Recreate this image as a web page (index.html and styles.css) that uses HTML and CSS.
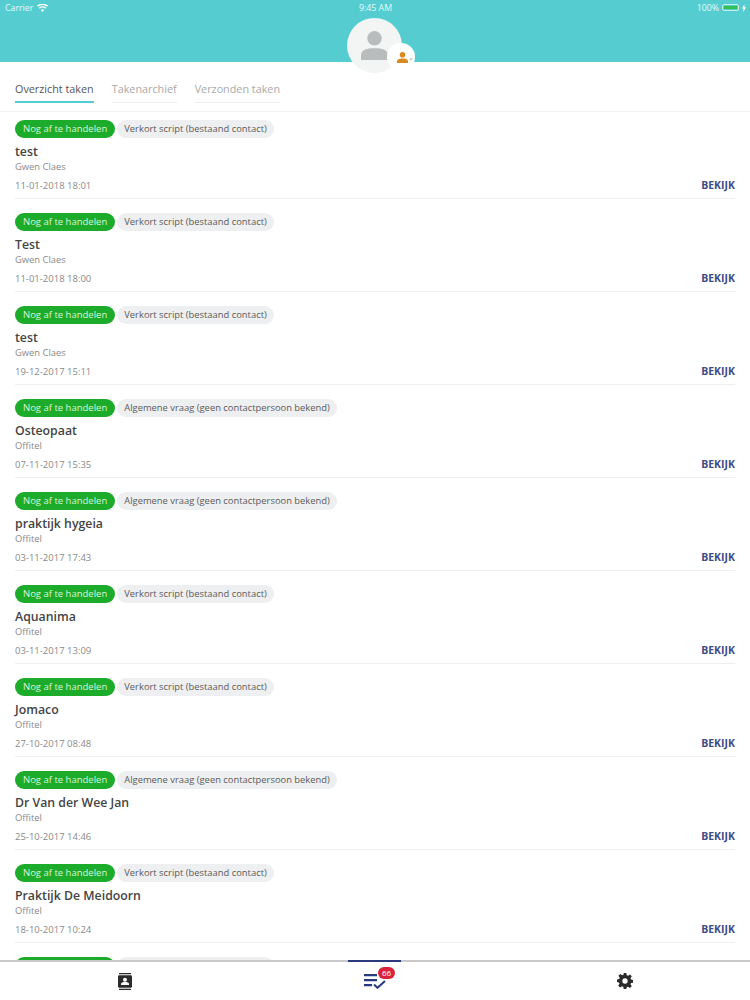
FILE: index.html
```html
<!DOCTYPE html>
<html lang="nl">
<head>
    <meta charset="UTF-8">
    <meta name="viewport" content="width=device-width, initial-scale=1.0">
    <title>Overzicht taken</title>
    <link rel="stylesheet" href="styles.css">
</head>
<body>
<div class="app">
    <header class="top">
        <div class="status">
            <div class="status-left">
                <span>Carrier</span>
                <svg width="11" height="8" viewBox="0 0 22 16"><path d="M11 16l-3.400-4a5 5 0 0 1 6.800 0zM5.600 9.700l-2-2.300a11 11 0 0 1 14.800 0l-2 2.300a8 8 0 0 0-10.800 0zM1.900 5.300L0 3.100a17 17 0 0 1 22 0l-1.900 2.200a14 14 0 0 0-18.200 0z" fill="#fff"/></svg>
            </div>
            <div class="status-time">9:45 AM</div>
            <div class="status-right">
                <span>100%</span>
                <span class="battery"><span class="battery-fill"></span></span>
                <svg width="4" height="8" viewBox="0 0 4 8"><path d="M2.500 0L0 4.500h1.500L1.200 8 4 3.300H2.300z" fill="#fff"/></svg>
            </div>
        </div>
        <div class="avatar">
            <svg width="27" height="29" viewBox="0 0 30 32"><circle cx="15" cy="8" r="8" fill="#b9bcbd"/><path d="M0 32v-5c0-6 6-8 15-8s15 2 15 8v5z" fill="#b9bcbd"/></svg>
            <span class="avatar-badge">
                <svg width="16" height="11" viewBox="0 0 16 11"><circle cx="5.500" cy="2.800" r="2.800" fill="#d98a1f"/><path d="M0 11V9.500C0 7.300 2.500 6.500 5.500 6.500s5.500.8 5.500 3V11z" fill="#d98a1f"/><path d="M12 6.500h4L14 8.500z" fill="#b9bcbd"/></svg>
            </span>
        </div>
    </header>

    <nav class="tabs">
        <a class="tab tab-active">Overzicht taken</a>
        <a class="tab">Takenarchief</a>
        <a class="tab">Verzonden taken</a>
    </nav>

    <main class="list">
        <div class="task">
            <div class="pills"><span class="pill pill-green">Nog af te handelen</span><span class="pill pill-grey">Verkort script (bestaand contact)</span></div>
            <div class="task-title">test</div>
            <div class="task-sub">Gwen Claes</div>
            <div class="task-foot"><span class="task-date">11-01-2018 18:01</span><a class="task-link">BEKIJK</a></div>
        </div>
        <div class="task">
            <div class="pills"><span class="pill pill-green">Nog af te handelen</span><span class="pill pill-grey">Verkort script (bestaand contact)</span></div>
            <div class="task-title">Test</div>
            <div class="task-sub">Gwen Claes</div>
            <div class="task-foot"><span class="task-date">11-01-2018 18:00</span><a class="task-link">BEKIJK</a></div>
        </div>
        <div class="task">
            <div class="pills"><span class="pill pill-green">Nog af te handelen</span><span class="pill pill-grey">Verkort script (bestaand contact)</span></div>
            <div class="task-title">test</div>
            <div class="task-sub">Gwen Claes</div>
            <div class="task-foot"><span class="task-date">19-12-2017 15:11</span><a class="task-link">BEKIJK</a></div>
        </div>
        <div class="task">
            <div class="pills"><span class="pill pill-green">Nog af te handelen</span><span class="pill pill-grey">Algemene vraag (geen contactpersoon bekend)</span></div>
            <div class="task-title">Osteopaat</div>
            <div class="task-sub">Offitel</div>
            <div class="task-foot"><span class="task-date">07-11-2017 15:35</span><a class="task-link">BEKIJK</a></div>
        </div>
        <div class="task">
            <div class="pills"><span class="pill pill-green">Nog af te handelen</span><span class="pill pill-grey">Algemene vraag (geen contactpersoon bekend)</span></div>
            <div class="task-title">praktijk hygeia</div>
            <div class="task-sub">Offitel</div>
            <div class="task-foot"><span class="task-date">03-11-2017 17:43</span><a class="task-link">BEKIJK</a></div>
        </div>
        <div class="task">
            <div class="pills"><span class="pill pill-green">Nog af te handelen</span><span class="pill pill-grey">Verkort script (bestaand contact)</span></div>
            <div class="task-title">Aquanima</div>
            <div class="task-sub">Offitel</div>
            <div class="task-foot"><span class="task-date">03-11-2017 13:09</span><a class="task-link">BEKIJK</a></div>
        </div>
        <div class="task">
            <div class="pills"><span class="pill pill-green">Nog af te handelen</span><span class="pill pill-grey">Verkort script (bestaand contact)</span></div>
            <div class="task-title">Jomaco</div>
            <div class="task-sub">Offitel</div>
            <div class="task-foot"><span class="task-date">27-10-2017 08:48</span><a class="task-link">BEKIJK</a></div>
        </div>
        <div class="task">
            <div class="pills"><span class="pill pill-green">Nog af te handelen</span><span class="pill pill-grey">Algemene vraag (geen contactpersoon bekend)</span></div>
            <div class="task-title">Dr Van der Wee Jan</div>
            <div class="task-sub">Offitel</div>
            <div class="task-foot"><span class="task-date">25-10-2017 14:46</span><a class="task-link">BEKIJK</a></div>
        </div>
        <div class="task">
            <div class="pills"><span class="pill pill-green">Nog af te handelen</span><span class="pill pill-grey">Verkort script (bestaand contact)</span></div>
            <div class="task-title">Praktijk De Meidoorn</div>
            <div class="task-sub">Offitel</div>
            <div class="task-foot"><span class="task-date">18-10-2017 10:24</span><a class="task-link">BEKIJK</a></div>
        </div>
        <div class="task">
            <div class="pills"><span class="pill pill-green">Nog af te handelen</span><span class="pill pill-grey">Verkort script (bestaand contact)</span></div>
        </div>
    </main>

    <footer class="tabbar">
        <div class="tabbar-item">
            <svg width="14" height="17" viewBox="0 0 14 17"><path d="M1 0h12v1.200H1zM1 15.800h12V17H1z" fill="#2b2b2b"/><rect y="2.200" width="14" height="12.600" rx="1.200" fill="#2b2b2b"/><circle cx="7" cy="6.700" r="2" fill="#fff"/><path d="M3 12v-1c0-1.500 2-2 4-2s4 .5 4 2v1z" fill="#fff"/></svg>
        </div>
        <div class="tabbar-item tabbar-active">
            <svg width="22" height="16" viewBox="0 0 22 16"><path d="M0 1h13v2.200H0zM0 6h13v2.200H0zM0 11h8v2.200H0z" fill="#2b3a7d"/><path d="M10 11.500l3.500 3.300L21 8" fill="none" stroke="#2b3a7d" stroke-width="2"/></svg>
            <span class="badge">66</span>
        </div>
        <div class="tabbar-item">
            <svg width="16" height="16" viewBox="0 0 24 24"><path fill-rule="evenodd" d="M10 0h4l.6 3.300 2 .8L19.400 2.200l2.800 2.800-1.900 2.800.8 2 3.300.6v4l-3.300.6-.8 2 1.900 2.800-2.800 2.800-2.800-1.900-2 .8L14 24h-4l-.6-3.300-2-.8-2.800 1.900-2.800-2.800 1.900-2.800-.8-2L0 13.600v-4l3.300-.6.800-2-1.900-2.800L5 1.400l2.800 1.900 2-.8zM12 8a4 4 0 1 0 0 8 4 4 0 0 0 0-8z" fill="#2b2b2b"/></svg>
        </div>
    </footer>
</div>
</body>
</html>
```

FILE: styles.css
```css
* {
    box-sizing: border-box;
}
html, body {
    margin: 0;
    height: 100%;
}
body {
    font-family: "Open Sans", Arial, sans-serif;
    background-color: #fff;
    color: #444;
}
.app {
    height: 1000px;
    display: flex;
    flex-direction: column;
    overflow: hidden;
}

/* header */
.top {
    position: relative;
    flex: none;
    height: 62px;
    background-color: #55cdd0;
}
.status {
    display: grid;
    grid-template-columns: 1fr auto 1fr;
    align-items: center;
    height: 15px;
    padding: 0 4px 0 5px;
    font-size: 8.800px;
    color: #e6f8f8;
}
.status-left {
    display: flex;
    align-items: center;
    gap: 4px;
}
.status-right {
    display: flex;
    align-items: center;
    justify-content: flex-end;
    gap: 3px;
}
.battery {
    display: block;
    width: 17px;
    height: 7px;
    padding: 1px;
    border: 1px solid #c6eeee;
    border-radius: 2px;
}
.battery-fill {
    display: block;
    height: 100%;
    background-color: #35bf4f;
}
.avatar {
    position: absolute;
    left: 347px;
    top: 18px;
    width: 55px;
    height: 55px;
    display: flex;
    align-items: flex-end;
    justify-content: center;
    padding-bottom: 13px;
    border-radius: 50%;
    background-color: #f3f5f5;
}
.avatar-badge {
    position: absolute;
    left: 40px;
    top: 25px;
    width: 28px;
    height: 28px;
    display: flex;
    align-items: center;
    justify-content: center;
    padding-left: 8px;
    border-radius: 50%;
    background-color: #fff;
}

/* tabs */
.tabs {
    flex: none;
    display: flex;
    gap: 18px;
    height: 50px;
    padding: 19px 15px 0;
    border-bottom: 1px solid #f3f3f3;
}
.tab {
    height: 22px;
    font-size: 10.800px;
    line-height: 15px;
    color: #a9a9a9;
    border-bottom: 1px solid #eceeee;
}
.tab-active {
    color: #555;
    border-bottom: 2px solid #55cdd0;
}

/* task list */
.list {
    flex: 1;
    min-height: 0;
    overflow: hidden;
    padding: 0 15px;
}
.task {
    height: 93px;
    padding-top: 14px;
    border-bottom: 1px solid #eef0f0;
}
.task:first-child {
    height: 87px;
    padding-top: 8px;
}
.pills {
    display: flex;
    gap: 2px;
}
.pill {
    height: 18px;
    padding: 0 8px;
    border-radius: 9px;
    font-size: 9.500px;
    line-height: 18px;
    white-space: nowrap;
}
.pill-green {
    background-color: #1dab2c;
    color: #d8f5da;
}
.pill-grey {
    padding: 0 7px;
    font-size: 9.400px;
    background-color: #eeeff0;
    color: #5c5c5c;
}
.task-title {
    margin-top: 5px;
    font-size: 12.300px;
    font-weight: 600;
    line-height: 18px;
    color: #444;
}
.task-sub {
    margin-top: -1px;
    font-size: 9.400px;
    line-height: 13px;
    color: #8a8a8a;
}
.task-foot {
    display: flex;
    justify-content: space-between;
    align-items: center;
    margin-top: 4px;
    height: 16px;
}
.task-date {
    font-size: 9.500px;
    color: #8a8a8a;
}
.task-link {
    font-size: 10.500px;
    font-weight: 700;
    color: #3f4c86;
}

/* bottom bar */
.tabbar {
    flex: none;
    display: grid;
    grid-template-columns: repeat(3, 1fr);
    height: 40px;
    background-color: #fff;
    border-top: 2px solid #c9c9c9;
}
.tabbar-item {
    position: relative;
    display: flex;
    align-items: center;
    justify-content: center;
}
.tabbar-active::before {
    content: "";
    position: absolute;
    left: 98px;
    top: -2px;
    width: 53px;
    height: 2px;
    background-color: #2b3a7d;
}
.badge {
    position: absolute;
    left: 128px;
    top: 5px;
    width: 17px;
    height: 12px;
    border-radius: 6px;
    background-color: #d9233c;
    color: #fff;
    font-size: 8px;
    line-height: 12px;
    text-align: center;
}
```
